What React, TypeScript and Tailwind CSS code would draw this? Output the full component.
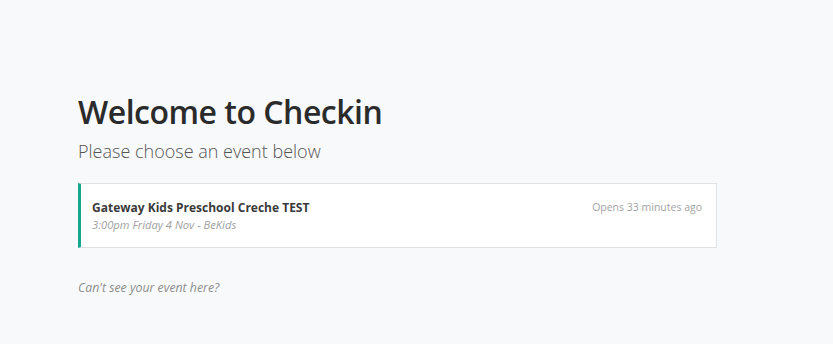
export default function App() {
  const events = [
    {
      id: 1,
      name: 'Gateway Kids Preschool Creche TEST',
      when: '3:00pm Friday 4 Nov - BeKids',
      status: 'Opens 33 minutes ago',
    },
  ]

  return (
    <div className="min-h-[344px] bg-[#f8f9fb] font-['Open_Sans',sans-serif] text-[#2b2b2b]">
      <div className="ml-[78px] w-[639px] pt-[90px]">
        <h1 className="text-[32px] leading-[44px] font-semibold tracking-[-0.5px]">Welcome to Checkin</h1>
        <p className="mt-[4px] text-[18px] leading-[26px] font-light text-[#555]">Please choose an event below</p>

        <div className="mt-[19px] flex flex-col gap-2">
          {events.map(ev => (
            <div
              key={ev.id}
              className="flex h-[65px] items-start justify-between border border-[#dfe1e4] border-l-[3px] border-l-[#14a88e] bg-white pl-[11px] pr-[14px] pt-[15px]"
            >
              <div>
                <p className="text-[12px] leading-[17px] font-bold text-[#3a3a3a]">{ev.name}</p>
                <p className="mt-[2px] text-[11.2px] leading-[14px] italic text-[#a0a0a0]">{ev.when}</p>
              </div>
              <p className="text-[10.5px] leading-[17px] text-[#a3a3a3]">{ev.status}</p>
            </div>
          ))}
        </div>

        <p className="mt-[31px] text-[12.3px] italic text-[#8e8e8e]">Can&apos;t see your event here?</p>
      </div>
    </div>
  )
}
